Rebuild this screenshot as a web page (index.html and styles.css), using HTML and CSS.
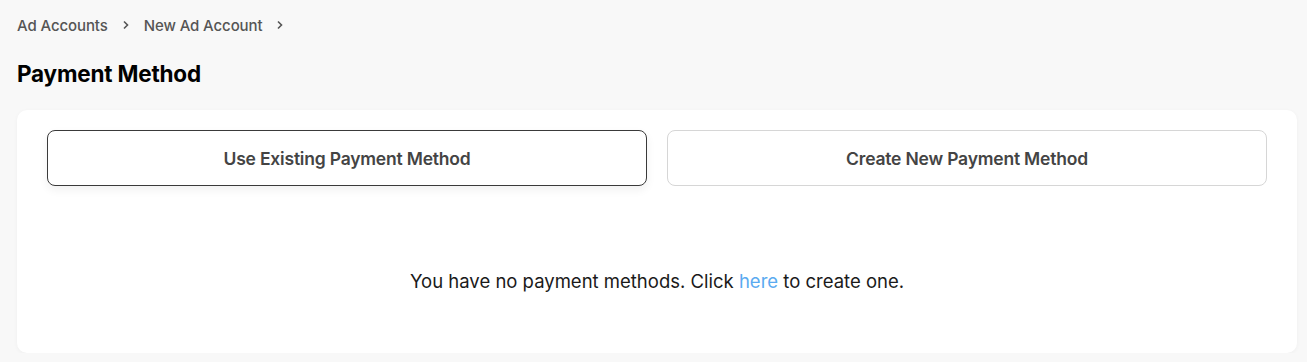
FILE: index.html
```html
<!DOCTYPE html>
<html lang="en">
<head>
<meta charset="utf-8">
<title>Payment Method</title>
<link rel="stylesheet" href="styles.css">
</head>
<body>
<div class="page">
  <nav class="breadcrumb">
    <a class="crumb" href="#">Ad Accounts</a>
    <svg class="chev" width="8" height="10" viewBox="0 0 8 10"><path d="M2 1.5 L5.5 5 L2 8.5" fill="none" stroke="#555" stroke-width="1.6"/></svg>
    <a class="crumb" href="#">New Ad Account</a>
    <svg class="chev" width="8" height="10" viewBox="0 0 8 10"><path d="M2 1.5 L5.5 5 L2 8.5" fill="none" stroke="#555" stroke-width="1.6"/></svg>
  </nav>
  <h1 class="title">Payment Method</h1>
  <section class="card">
    <div class="options">
      <button class="option option-active">Use Existing Payment Method</button>
      <button class="option">Create New Payment Method</button>
    </div>
    <p class="empty">You have no payment methods. Click <a href="#" class="link">here</a> to create one.</p>
  </section>
</div>
</body>
</html>
```

FILE: styles.css
```css
* { box-sizing: border-box; }
html, body {
  margin: 0;
  padding: 0;
  background: #f8f8f8;
  font-family: Inter, "Noto Sans", sans-serif;
  color: #111;
}
.page {
  padding: 0 10px 0 17px;
}
.breadcrumb {
  display: flex;
  align-items: center;
  height: 50px;
}
.crumb {
  font-size: 15px;
  font-weight: 500;
  color: #555;
  text-decoration: none;
  letter-spacing: -0.1px;
}
.chev {
  margin: 0 14px 0 14px;
}
.title {
  margin: 0;
  font-size: 22.5px;
  font-weight: 700;
  line-height: 48px;
  color: #000;
  letter-spacing: -0.2px;
}
.card {
  margin-top: 12px;
  background: #fff;
  border-radius: 10px;
  box-shadow: 0 1px 4px rgba(0,0,0,0.04);
  padding: 20px 30px 0 30px;
  height: 243px;
}
.options {
  display: grid;
  grid-template-columns: 1fr 1fr;
  gap: 20px;
}
.option {
  height: 56px;
  background: #fff;
  border: 1px solid #d6d6d6;
  border-radius: 8px;
  font-family: inherit;
  font-size: 17.5px;
  font-weight: 600;
  color: #444;
  letter-spacing: -0.2px;
  cursor: pointer;
}
.option-active {
  border-color: #3a3a3a;
  box-shadow: 0 4px 10px rgba(0,0,0,0.06);
}
.empty {
  margin: 83px 0 0 0;
  text-align: center;
  font-size: 18.5px;
  line-height: 24px;
  color: #1a1a1a;
}
.link {
  color: #5aaaf0;
  text-decoration: none;
}
```
